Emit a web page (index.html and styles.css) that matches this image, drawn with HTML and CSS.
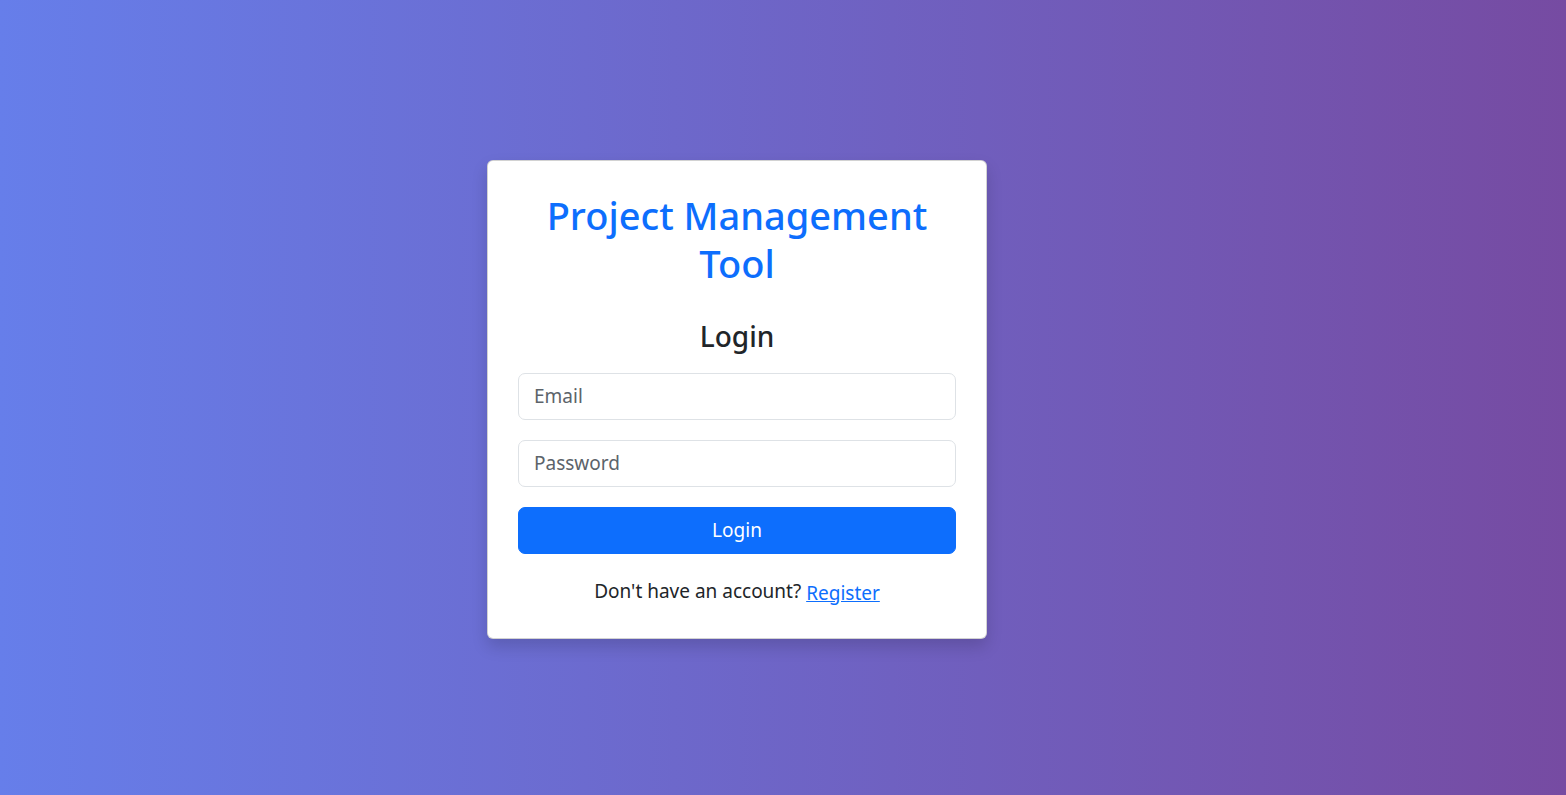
FILE: index.html
```html
<!DOCTYPE html>
<html lang="en">
<head>
<meta charset="utf-8">
<title>Login - Project Management Tool</title>
<link rel="stylesheet" href="styles.css">
</head>
<body>
<main class="page">
  <div class="card">
    <h1 class="brand">Project Management Tool</h1>
    <h3 class="heading">Login</h3>
    <form class="form">
      <input class="field" type="email" placeholder="Email">
      <input class="field" type="password" placeholder="Password">
      <button class="btn" type="button">Login</button>
    </form>
    <p class="footer">Don't have an account? <a class="link" href="#">Register</a></p>
  </div>
</main>
</body>
</html>
```

FILE: styles.css
```css
* { box-sizing: border-box; }
html, body { margin: 0; height: 100%; }
body {
  font-family: "Noto Sans", "Open Sans", sans-serif;
  color: #212529;
  background: linear-gradient(to right, #667eea 0%, #764ba2 100%);
}
.page {
  min-height: 100%;
  display: flex;
  align-items: center;
  justify-content: center;
  padding: 4px 92px 0 0;
}
.card {
  width: 500px;
  background: #fff;
  border: 1px solid rgba(0,0,0,0.175);
  border-radius: 6px;
  box-shadow: 0 8px 16px rgba(0,0,0,0.15);
  padding: 30px 30px 33px;
  text-align: center;
}
.brand {
  margin: 0 0 33px;
  font-size: 38px;
  font-weight: 500;
  line-height: 48px;
  color: #0d6efd;
}
.heading {
  margin: 0 0 19px;
  font-size: 28px;
  font-weight: 500;
  line-height: 1.2;
}
.form {
  display: flex;
  flex-direction: column;
  gap: 20px;
}
.field {
  height: 47px;
  padding: 0 15px;
  font: inherit;
  font-size: 19px;
  color: #212529;
  border: 1px solid #dee2e6;
  border-radius: 7px;
  outline: none;
}
.field::placeholder { color: #5c636a; }
.btn {
  height: 47px;
  font: inherit;
  font-size: 19px;
  color: #fff;
  background: #0d6efd;
  border: 1px solid #0d6efd;
  border-radius: 7px;
}
.footer {
  margin: 23px 0 0;
  font-size: 19px;
  line-height: 1.5;
}
.link {
  color: #0d6efd;
  text-decoration: underline;
  position: relative;
  top: 2px;
}
```
